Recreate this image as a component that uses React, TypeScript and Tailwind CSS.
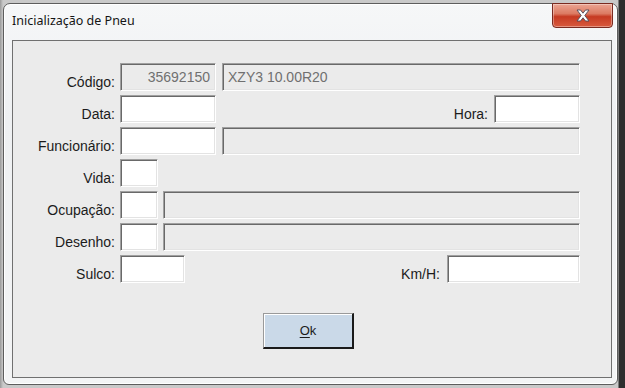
import React from "react";

type FieldProps = {
  w: string;
  value?: string;
  right?: boolean;
  readOnly?: boolean;
};

function Field({ w, value, right, readOnly }: FieldProps) {
  return (
    <div
      className={`${w} h-[28px] shrink-0 flex items-center border border-t-[#a0a0a0] border-l-[#a0a0a0] border-b-white border-r-white shadow-[inset_1px_1px_0_#696969,inset_-1px_-1px_0_#e3e3e3] px-[5px] text-[14px] text-[#707070] ${
        readOnly ? "bg-[#ebebeb]" : "bg-white"
      } ${right ? "justify-end" : "justify-start"}`}
    >
      {value}
    </div>
  );
}

function Label({ children }: { children: React.ReactNode }) {
  return (
    <div className="w-[102px] shrink-0 self-end pb-[1px] text-right text-[14px] leading-[16px] text-[#1b1b1b]">
      {children}
    </div>
  );
}

export default function App() {
  return (
    <div className="h-[388px] w-[625px] overflow-hidden bg-[linear-gradient(90deg,#9a9a9a_0px,#c9c9c9_3px,#c9c9c9_618px,#2e2e2e_619px)] pt-[3px] pl-[3px] font-['Liberation_Sans',Arial,sans-serif]">
      {/* Window frame */}
      <div className="flex h-[382px] w-[615px] flex-col rounded-t-[7px] rounded-b-[6px] border border-[#5d5d5d] bg-[linear-gradient(180deg,#f6f7f8_0%,#eef0f2_30%,#f3f4f5_100%)] shadow-[inset_0_0_0_1px_#ffffff]">
        {/* Title bar */}
        <div className="flex h-[36px] items-start justify-between">
          <div className="pl-[8px] pt-[8px] font-['Noto_Sans',sans-serif] text-[12.5px] text-[#141414]">
            Inicialização de Pneu
          </div>
          <div className="mr-[4px] mt-[-1px] flex h-[25px] w-[61px] items-center justify-center rounded-b-[4px] border border-[#7a2a20] bg-[linear-gradient(180deg,#eba593_0%,#dc7a62_42%,#c63a22_55%,#d85a3e_100%)] shadow-[inset_0_0_0_1px_rgba(255,255,255,0.35)]">
            <svg width="16" height="13" viewBox="0 0 16 13">
              <path
                d="M2 1 L5.5 1 L8 4.2 L10.5 1 L14 1 L9.8 6.5 L14 12 L10.5 12 L8 8.8 L5.5 12 L2 12 L6.2 6.5 Z"
                fill="#ffffff"
                stroke="#4a4a5a"
                strokeWidth="0.9"
                strokeLinejoin="round"
              />
            </svg>
          </div>
        </div>

        {/* Client area */}
        <div className="ml-[8px] mr-[5px] mb-[6px] flex-1 border border-[#707070] bg-[#ebebeb]">
          <div className="flex flex-col gap-[4px] pt-[22px]">
            <div className="flex h-[28px] items-center">
              <Label>Código:</Label>
              <div className="ml-[5px] flex gap-[6px]">
                <Field w="w-[96px]" value="35692150" right readOnly />
                <Field w="w-[358px]" value="XZY3 10.00R20" readOnly />
              </div>
            </div>

            <div className="flex h-[28px] items-center">
              <Label>Data:</Label>
              <div className="ml-[5px]">
                <Field w="w-[96px]" />
              </div>
              <div className="ml-auto self-end pb-[1px] text-[14px] leading-[16px] text-[#1b1b1b]">
                Hora:
              </div>
              <div className="ml-[6px] mr-[31px]">
                <Field w="w-[86px]" />
              </div>
            </div>

            <div className="flex h-[28px] items-center">
              <Label>Funcionário:</Label>
              <div className="ml-[5px] flex gap-[6px]">
                <Field w="w-[96px]" />
                <Field w="w-[358px]" readOnly />
              </div>
            </div>

            <div className="flex h-[28px] items-center">
              <Label>Vida:</Label>
              <div className="ml-[5px]">
                <Field w="w-[38px]" />
              </div>
            </div>

            <div className="flex h-[28px] items-center">
              <Label>Ocupação:</Label>
              <div className="ml-[5px] flex gap-[5px]">
                <Field w="w-[38px]" />
                <Field w="w-[417px]" readOnly />
              </div>
            </div>

            <div className="flex h-[28px] items-center">
              <Label>Desenho:</Label>
              <div className="ml-[5px] flex gap-[5px]">
                <Field w="w-[38px]" />
                <Field w="w-[417px]" readOnly />
              </div>
            </div>

            <div className="flex h-[28px] items-center">
              <Label>Sulco:</Label>
              <div className="ml-[5px]">
                <Field w="w-[65px]" />
              </div>
              <div className="ml-auto self-end pb-[1px] text-[14px] leading-[16px] text-[#1b1b1b]">
                Km/H:
              </div>
              <div className="ml-[7px] mr-[31px]">
                <Field w="w-[133px]" />
              </div>
            </div>
          </div>

          {/* Ok button */}
          <div className="mt-[30px] pl-[250px]">
            <button className="flex h-[36px] w-[91px] items-center justify-center border border-[#9a9a9a] border-r-2 border-b-2 border-r-[#1a1a1a] border-b-[#1a1a1a] bg-[#cad9e8] text-[13px] text-[#1b1b1b] shadow-[inset_1px_1px_0_#ffffff]">
              <span>
                <span className="underline underline-offset-2">O</span>k
              </span>
            </button>
          </div>
        </div>
      </div>
    </div>
  );
}
